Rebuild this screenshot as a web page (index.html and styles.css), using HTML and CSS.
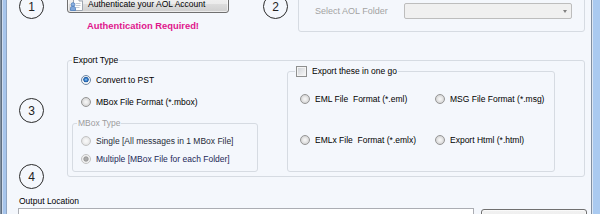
FILE: index.html
```html
<!DOCTYPE html>
<html lang="en">
<head>
<meta charset="utf-8">
<title>AOL Export</title>
<link rel="stylesheet" href="styles.css">
</head>
<body>
<div class="window">
  <div class="frame frame-left"></div>
  <div class="content">
    <div class="main">
      <div class="steps">
        <div class="step">1</div>
        <div class="step step-3">3</div>
        <div class="step step-4">4</div>
      </div>
      <div class="panels">
        <div class="row-top">
          <div class="auth">
            <button class="btn auth-btn">
              <svg class="auth-icon" width="13" height="14" viewBox="0 0 13 14">
                <path d="M3.5 0.5h5.5l3.5 3.5v9.5h-9z" fill="#fdfdfd" stroke="#9ea6b0"/>
                <path d="M9 0.5v3.5h3.5" fill="#e4e8ee" stroke="#9ea6b0"/>
                <path d="M5.5 6.5h5M5.5 8.5h5M5.5 10.5h4" stroke="#c3cad4"/>
                <circle cx="3" cy="7.5" r="1.8" fill="#8fb3e2" stroke="#4d7dbd" stroke-width="0.8"/>
                <path d="M0.5 13.5v-2.2c0-1.2 1.1-2 2.5-2s2.5 0.8 2.5 2v2.2z" fill="#7fa6da" stroke="#4d7dbd" stroke-width="0.8"/>
              </svg>
              <span>Authenticate your AOL Account</span>
            </button>
            <div class="auth-warn">Authentication Required!</div>
          </div>
          <div class="step step-2">2</div>
          <div class="folder-group">
            <span class="folder-label">Select AOL Folder</span>
            <div class="combo"><span class="combo-arrow"></span></div>
          </div>
        </div>
        <fieldset class="box export-type">
          <legend>Export Type</legend>
          <div class="export-body">
            <div class="export-left">
              <label class="opt"><input type="radio" name="type" class="radio" checked><span>Convert to PST</span></label>
              <label class="opt opt-2"><input type="radio" name="type" class="radio"><span>MBox File Format (*.mbox)</span></label>
              <fieldset class="box mbox-type">
                <legend>MBox Type</legend>
                <label class="opt sub single"><input type="radio" name="mbox" class="radio"><span>Single [All messages in 1 MBox File]</span></label>
                <label class="opt sub multiple"><input type="radio" name="mbox" class="radio" checked><span>Multiple [MBox File for each Folder]</span></label>
              </fieldset>
            </div>
            <fieldset class="box one-go">
              <legend class="one-go-legend"><input type="checkbox" class="check"><span>Export these in one go</span></legend>
              <div class="formats">
                <label class="opt"><input type="radio" name="fmt" class="radio"><span>EML File&nbsp; Format (*.eml)</span></label>
                <label class="opt"><input type="radio" name="fmt" class="radio"><span>MSG File Format (*.msg)</span></label>
                <label class="opt"><input type="radio" name="fmt" class="radio"><span>EMLx File&nbsp; Format (*.emlx)</span></label>
                <label class="opt"><input type="radio" name="fmt" class="radio"><span>Export Html (*.html)</span></label>
              </div>
            </fieldset>
          </div>
        </fieldset>
      </div>
    </div>
    <div class="output">
      <div class="output-label">Output Location</div>
      <div class="output-row">
        <div class="textbox"></div>
        <button class="btn browse"></button>
      </div>
    </div>
  </div>
  <div class="frame frame-right"></div>
</div>
</body>
</html>
```

FILE: styles.css
```css
html, body {
  margin: 0;
  height: 100%;
  overflow: hidden;
}

body {
  font-family: "Liberation Sans", Arial, sans-serif;
  font-size: 8.5px;
  color: #000;
  background: #f4f7fc;
}

.window {
  display: flex;
  height: 214px;
  overflow: hidden;
}

.frame {
  flex: none;
}

.frame-left {
  width: 7px;
  background: linear-gradient(to right, #8593a2 0 1px, #5f6e80 1px 2px, #cfdcee 2px 3px, #a7c5ec 3px 6px, #8fa5c2 6px 7px);
}

.frame-right {
  width: 9px;
  background: linear-gradient(to right, #8290a2 0 1px, #dbe6f3 1px 2px, #aacaf0 2px 9px);
}

.content {
  flex: 1;
  min-width: 0;
  display: flex;
  flex-direction: column;
  background: #f4f7fc;
}

.main {
  display: flex;
  margin-top: -6px;
}

.steps {
  flex: none;
  width: 60px;
  box-sizing: border-box;
  padding-left: 12px;
  display: flex;
  flex-direction: column;
}

.step {
  flex: none;
  width: 25px;
  height: 25px;
  box-sizing: border-box;
  border: 1px solid #2a2a2a;
  border-radius: 50%;
  display: flex;
  align-items: center;
  justify-content: center;
  font-size: 12px;
  line-height: 1;
  color: #222;
}

.step-3 { margin-top: 79px; }
.step-4 { margin-top: 41px; }
.step-2 { margin-left: 34px; }

.panels {
  flex: none;
  width: 518px;
  display: flex;
  flex-direction: column;
}

.row-top {
  display: flex;
  align-items: flex-start;
}

.auth {
  flex: none;
  width: 162px;
  margin-top: 1px;
}

.btn {
  font: inherit;
  color: #000;
  margin: 0;
  box-sizing: border-box;
  border: 1px solid #707070;
  border-radius: 3px;
  background: linear-gradient(#f2f2f2 0%, #ebebeb 50%, #dddddd 50%, #cfcfcf 100%);
  box-shadow: inset 0 0 0 1px rgba(255, 255, 255, 0.6);
}

.auth-btn {
  width: 162px;
  height: 18px;
  display: flex;
  align-items: center;
  gap: 5px;
  padding: 0 0 0 2px;
  white-space: nowrap;
}

.auth-icon {
  flex: none;
  display: block;
}

.auth-warn {
  margin-top: 8px;
  padding-left: 20px;
  font-weight: bold;
  font-size: 9.4px;
  line-height: 10px;
  color: #e0168c;
  white-space: nowrap;
}

.folder-group {
  flex: 1;
  margin-left: 10px;
  height: 38px;
  box-sizing: border-box;
  border: 1px solid #d6dbe2;
  border-radius: 3px;
  padding: 8px 12px 0 16px;
  display: flex;
  align-items: flex-start;
}

.folder-label {
  flex: none;
  width: 89px;
  font-size: 9px;
  line-height: 16px;
  color: #a3a3a3;
  white-space: nowrap;
}

.combo {
  flex: 1;
  height: 16px;
  box-sizing: border-box;
  border: 1px solid #bdbdbd;
  border-radius: 2px;
  background: #f0f0f0;
  display: flex;
  align-items: center;
  justify-content: flex-end;
  padding-right: 4px;
}

.combo-arrow {
  width: 0;
  height: 0;
  border-left: 2.5px solid transparent;
  border-right: 2.5px solid transparent;
  border-top: 3px solid #808080;
}

.box {
  margin: 0;
  min-inline-size: 0;
  box-sizing: border-box;
  border: 1px solid #d6dbe2;
  border-radius: 3px;
}

.box > legend {
  padding: 0 1px;
  line-height: 10px;
}

.export-type {
  margin-top: 23px;
  padding: 0 29px 4px 4px;
}

.export-body {
  display: flex;
}

.export-left {
  flex: none;
  width: 186px;
  padding-top: 8px;
  display: flex;
  flex-direction: column;
}

.opt {
  display: flex;
  align-items: center;
  gap: 5px;
  height: 14px;
  white-space: nowrap;
}

.export-left > .opt { padding-left: 9px; }
.export-left > .opt-2 { margin-top: 8px; }

.mbox-type {
  margin-top: 9px;
  padding: 6px 0 5px 4px;
}

.mbox-type > legend { color: #9c9c9c; }

.sub { margin-left: 4px; }
.multiple { margin-top: 4px; }
.single { color: #262b38; }
.multiple { color: #1c2858; }

.one-go {
  flex: 1;
  margin-left: 29px;
  padding: 15px 0 0 7px;
}

.one-go > .one-go-legend {
  display: flex;
  align-items: center;
  gap: 5px;
  height: 12px;
  line-height: 12px;
  padding: 0 1px;
}

.formats {
  display: grid;
  grid-template-columns: 135px auto;
  row-gap: 27px;
  padding-left: 5px;
}

.radio {
  appearance: none;
  -webkit-appearance: none;
  flex: none;
  margin: 0;
  width: 10px;
  height: 10px;
  box-sizing: border-box;
  border: 1px solid #959595;
  border-radius: 50%;
  background: radial-gradient(circle at 50% 50%, #f7f7f7 0, #eeeeee 1.5px, #d6d6d6 4px);
}

.radio:checked {
  border-color: #6f87a3;
  background: radial-gradient(circle at 50% 45%, #9fd0f7 0, #3f86d0 1.2px, #1d5aa2 2.4px, #e9eef3 3px, #f7f7f7 4px);
}

.mbox-type .radio {
  border-color: #c3c3c3;
  background: radial-gradient(circle at 50% 50%, #fafafa 0, #f2f2f2 2px, #e4e4e4 4px);
}

.mbox-type .radio:checked {
  background: radial-gradient(circle at 50% 50%, #b3b3b3 0, #9c9c9c 2.2px, #ececec 3px, #f5f5f5 4px);
}

.check {
  appearance: none;
  -webkit-appearance: none;
  flex: none;
  margin: 0;
  width: 11px;
  height: 11px;
  box-sizing: border-box;
  border: 1px solid #8e8f8f;
  background: linear-gradient(135deg, #cdd0d5, #fafafa);
  box-shadow: inset 0 0 0 1px #f4f4f4;
}

.output-label {
  margin-top: 7px;
  padding-left: 12px;
  line-height: 10px;
}

.output-row {
  display: flex;
  gap: 7px;
  margin-top: 2px;
  padding-left: 11px;
}

.textbox {
  flex: none;
  width: 456px;
  height: 20px;
  box-sizing: border-box;
  background: #fff;
  border: 1px solid #abadb3;
}

.browse {
  flex: none;
  width: 106px;
  height: 22px;
  margin-top: 1px;
}
```
